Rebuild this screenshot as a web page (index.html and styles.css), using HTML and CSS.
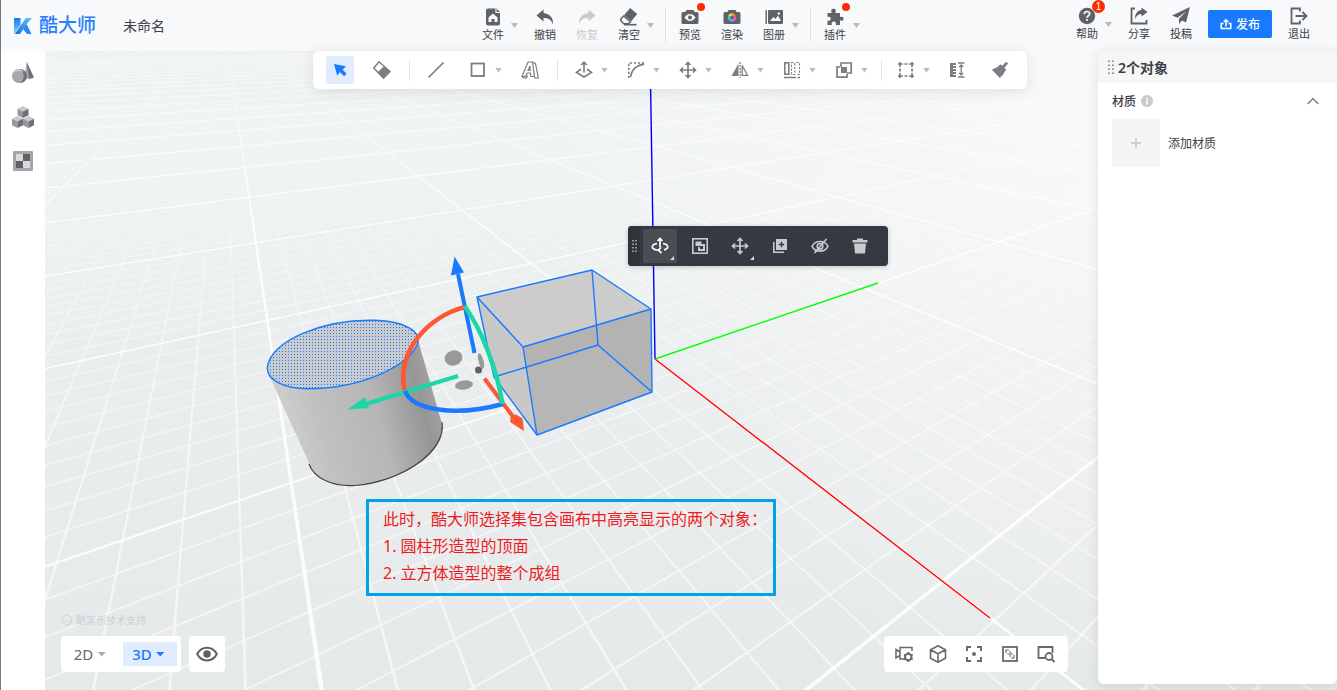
FILE: index.html
```html
<!DOCTYPE html>
<html lang="zh-CN">
<head>
<meta charset="utf-8">
<title>酷大师</title>
<link rel="stylesheet" href="styles.css">
</head>
<body>
<div class="app">
  <header class="topbar">
    <div class="brand">
      <svg class="brand-mark" viewBox="0 0 18 16" aria-hidden="true">
        <defs>
          <linearGradient id="lg1" x1="0" y1="0" x2="0" y2="1"><stop offset="0" stop-color="#1a73f5"/><stop offset="1" stop-color="#7fd4ff"/></linearGradient>
          <linearGradient id="lg2" x1="1" y1="0" x2="0" y2="1"><stop offset="0" stop-color="#5cc8ff"/><stop offset="1" stop-color="#1668f0"/></linearGradient>
        </defs>
        <path d="M0 0h6.500v7L0 16z" fill="url(#lg1)"/>
        <path d="M12 0h6l-6 7L6 16H.8z" fill="url(#lg2)"/>
        <path d="M9 11l3.500-5 5 10h-4.500z" fill="#2a86fb"/>
      </svg>
      <span class="brand-name">酷大师</span>
      <span class="doc-name">未命名</span>
    </div>

    <nav class="tools">
      <div class="drop">
        <button class="tool"><svg viewBox="0 0 18 18"><path d="M4 .5h8.500L16 4v11.500a2 2 0 0 1-2 2H4a2 2 0 0 1-2-2v-13a2 2 0 0 1 2-2z" fill="currentColor"/><path d="M12 .5v4h4" fill="none" stroke="#f7f9fb" stroke-width="1.200"/><path d="M9 5.500l4.500 4v4.500h-3v-3h-3v3h-3V9.500z" fill="#f7f9fb"/></svg><span>文件</span></button>
        <i class="caret"></i>
      </div>
      <button class="tool"><svg viewBox="0 0 18 18"><path d="M7.500 1.500L.5 7.500l7 6V10c5-.5 8 2 9.500 6.500.6-6-3-11-9.500-11.500z" fill="currentColor"/></svg><span>撤销</span></button>
      <button class="tool tool-off" disabled><svg viewBox="0 0 18 18"><path d="M10.500 1.500l7 6-7 6V10c-5-.5-8 2-9.500 6.500C.4 10.500 4 5.500 10.500 5z" fill="currentColor"/></svg><span>恢复</span></button>
      <div class="drop">
        <button class="tool"><svg viewBox="0 0 18 18"><path d="M10.200 0l7 6-6 7.200-7.200-6z" fill="currentColor"/><path d="M3.600 8l6.800 5.800-1.800 2H3.800L.8 12.800V11z" fill="none" stroke="currentColor" stroke-width="1.500"/><path d="M4 16.700h12.500" stroke="currentColor" stroke-width="1.600"/></svg><span>清空</span></button>
        <i class="caret"></i>
      </div>
      <i class="split"></i>
      <button class="tool"><svg viewBox="0 0 18 18"><path d="M5.500 2h7l1 2H16a1.500 1.500 0 0 1 1.500 1.500v9A1.500 1.500 0 0 1 16 16H2a1.500 1.500 0 0 1-1.500-1.500v-9A1.500 1.500 0 0 1 2 4h2.500z" fill="currentColor"/><path d="M3.500 9.500c3-4.600 8-4.600 11 0-3 4.600-8 4.600-11 0z" fill="#f7f9fb"/><circle cx="9" cy="9.500" r="2" fill="currentColor"/></svg><b class="dot"></b><span>预览</span></button>
      <button class="tool"><svg viewBox="0 0 18 18"><path d="M5.500 2h7l1 2H16a1.500 1.500 0 0 1 1.500 1.500v9A1.500 1.500 0 0 1 16 16H2a1.500 1.500 0 0 1-1.500-1.500v-9A1.500 1.500 0 0 1 2 4h2.500z" fill="currentColor"/><g fill="none" stroke-width="2.600"><path d="M9 6.500a3 3 0 0 1 2.600 1.500" stroke="#ff8a3c"/><path d="M11.600 8a3 3 0 0 1 0 3" stroke="#ff5577"/><path d="M11.600 11A3 3 0 0 1 9 12.500" stroke="#c66cff"/><path d="M9 12.500A3 3 0 0 1 6.400 11" stroke="#35b8ff"/><path d="M6.400 11a3 3 0 0 1 0-3" stroke="#35e08a"/><path d="M6.400 8A3 3 0 0 1 9 6.500" stroke="#e2e63a"/></g></svg><span>渲染</span></button>
      <div class="drop">
        <button class="tool"><svg viewBox="0 0 18 18"><path d="M1.200 2v14" stroke="currentColor" stroke-width="1.400"/><rect x="3" y="2" width="15" height="14" rx="1" fill="currentColor"/><path d="M5 13l3.500-4 2 2L13 7.500l3 5.500z" fill="#f7f9fb"/><circle cx="13.800" cy="5.500" r="1.200" fill="#f7f9fb"/></svg><span>图册</span></button>
        <i class="caret"></i>
      </div>
      <i class="split"></i>
      <div class="drop">
        <button class="tool"><svg viewBox="0 0 18 18"><path d="M1.500 5h4.200C4.500 1.500 6 .8 7.500.8S10.500 1.500 9.300 5h4.700v4.200c2.500-1 3.500 0 3.500 1.500s-1 2.600-3.500 1.500V17H9.800c.8-2.600-.6-3.500-2-3.500s-2.800.9-2 3.500H1.500v-4.500c2.500.8 3.200-.5 3.200-1.800S4 8.200 1.500 9z" fill="currentColor"/></svg><b class="dot"></b><span>插件</span></button>
        <i class="caret"></i>
      </div>
    </nav>

    <div class="account">
      <div class="drop">
        <button class="tool"><svg viewBox="0 0 18 18"><circle cx="9" cy="9" r="8.200" fill="currentColor"/><path d="M6.300 7.200c0-3.600 5.400-3.400 5.400-.4 0 1.900-2.700 2-2.700 4" fill="none" stroke="#f7f9fb" stroke-width="1.700"/><rect x="8.100" y="12" width="1.800" height="1.900" fill="#f7f9fb"/></svg><b class="count">1</b><span>帮助</span></button>
        <i class="caret"></i>
      </div>
      <button class="tool"><svg viewBox="0 0 18 18"><path d="M5 1.500H1.500v15h15V13" fill="none" stroke="currentColor" stroke-width="1.800"/><path d="M11.500.5L17.500 5l-6 4.500V7C8.500 7 6.500 8.500 5 12 5 6.500 7.500 3.500 11.500 3z" fill="currentColor"/></svg><span>分享</span></button>
      <button class="tool"><svg viewBox="0 0 18 18"><path d="M18 0L0 8.500l5.500 2.200L14 4.500l-7 7.300V17l3-3.600 4 2.100z" fill="currentColor"/></svg><span>投稿</span></button>
      <button class="publish"><svg viewBox="0 0 12 12" aria-hidden="true"><path d="M3.500 5.500H1.200v5h9.600v-5H8.500M6 8.500V2M3.800 4L6 1.800 8.200 4" fill="none" stroke="currentColor" stroke-width="1.500"/></svg>发布</button>
      <button class="tool"><svg viewBox="0 0 18 18"><path d="M10 4.500V1.500H1.500v15H10v-3M5.500 9H16M12.500 5l4 4-4 4" fill="none" stroke="currentColor" stroke-width="1.800"/></svg><span>退出</span></button>
    </div>
  </header>

  <main class="workspace">
    <aside class="rail">
      <button aria-label="基本体"><svg viewBox="0 0 22 22"><path d="M14.800 0l7 15.500-5.500 1.500-4-1.500z" fill="#a6a7ab"/><path d="M14.800 0l7 15.500-4.600 1.500z" fill="#6f7176"/><circle cx="7" cy="14" r="7" fill="#a6a7ab"/><path d="M8 7a7 7 0 0 1 0 14c5-3.500 5-10.500 0-14z" fill="#6f7176"/><path d="M1 11c2-4 8-5 11-1-4-1.800-7-1-11 1z" fill="#c6c7ca"/></svg></button>
      <button aria-label="组件"><svg viewBox="0 0 22 22"><g id="cube"><path d="M11 0l5.500 2.800L11 5.600 5.500 2.800z" fill="#c9cacd"/><path d="M5.500 2.800L11 5.600V12L5.500 9.200z" fill="#96979b"/><path d="M16.500 2.800L11 5.600V12l5.500-2.800z" fill="#6d6f74"/></g><use href="#cube" x="-5.500" y="10"/><use href="#cube" x="5.500" y="10"/></svg></button>
      <button aria-label="材质"><svg viewBox="0 0 22 22"><rect x="1" y="1" width="20" height="20" rx="1" fill="#a5a6aa"/><path d="M4 4h14v14H4z" fill="#d9dadc"/><path d="M11 4h7v7h-7zM4 11h7v7H4z" fill="#5f6166"/></svg></button>
    </aside>

    <section class="stage">
      <svg class="scene" viewBox="45 51 1292 639" preserveAspectRatio="xMinYMin slice" aria-hidden="true">
        <defs>
          <linearGradient id="floor" gradientUnits="userSpaceOnUse" x1="0" y1="51" x2="0" y2="690"><stop offset="0" stop-color="#eef1f1"/><stop offset=".12" stop-color="#f1f4f5"/><stop offset=".45" stop-color="#ebeeef"/><stop offset="1" stop-color="#e6e9ea"/></linearGradient>
          <radialGradient id="haze" gradientUnits="userSpaceOnUse" cx="1100" cy="120" r="560"><stop offset="0" stop-color="#fafafa" stop-opacity=".8"/><stop offset="1" stop-color="#fafafa" stop-opacity="0"/></radialGradient>
          <linearGradient id="fadeMinor" gradientUnits="userSpaceOnUse" x1="0" y1="130" x2="0" y2="420"><stop offset="0" stop-color="#000"/><stop offset=".5" stop-color="#888"/><stop offset="1" stop-color="#ccc"/></linearGradient>
          <linearGradient id="fadeMajor" gradientUnits="userSpaceOnUse" x1="0" y1="50" x2="0" y2="240"><stop offset="0" stop-color="#555"/><stop offset="1" stop-color="#fff"/></linearGradient>
          <mask id="maskMinor" maskUnits="userSpaceOnUse" x="0" y="0" width="3000" height="2000"><rect width="3000" height="2000" fill="url(#fadeMinor)"/></mask>
          <mask id="maskMajor" maskUnits="userSpaceOnUse" x="0" y="0" width="3000" height="2000"><rect width="3000" height="2000" fill="url(#fadeMajor)"/></mask>
          <linearGradient id="wall" gradientUnits="userSpaceOnUse" x1="285" y1="440" x2="440" y2="398"><stop offset="0" stop-color="#cfcfcf"/><stop offset=".25" stop-color="#c0c0c0"/><stop offset=".6" stop-color="#b6b6b6"/><stop offset=".88" stop-color="#959595"/><stop offset="1" stop-color="#a5a5a5"/></linearGradient>
          <pattern id="dots" width="3" height="3" patternUnits="userSpaceOnUse"><rect width="3" height="3" fill="#cbcbcb"/><rect width="1" height="1" fill="#1a7aff"/></pattern>
        </defs>
        <rect x="45" y="51" width="3000" height="2000" fill="url(#floor)"/>
        <rect x="45" y="51" width="3000" height="2000" fill="url(#haze)"/>
        <g mask="url(#maskMinor)"><path id="minor" fill="#fff" stroke="#fff" stroke-width=".6" opacity=".75"/></g>
        <g mask="url(#maskMajor)"><path id="major" fill="#fff" stroke="#fff" stroke-width="1" opacity=".85"/></g>

        <g fill="none" stroke-width="1.400">
          <path d="M650 51L655 359" stroke="#0000f5"/>
          <path d="M655 359L878 283" stroke="#0f0"/>
          <path d="M655 359L990 618" stroke="#f00"/>
        </g>

        <path d="M268 373L310 465C314 478 332 487 355 485.500 400 482 446 455 442 424L418 340z" fill="url(#wall)"/>
        <path d="M309 464C314 478 332 487 355 485.500 400 482 447 452 442 422" fill="none" stroke="#444" stroke-width="1.200"/>
        <path d="M267.300 368C270 340 325 319 375 320.300 405 321 422 332 417.500 344 408 366 362 388.500 308 388.700 284 388.500 267 380 267.300 368z" fill="url(#dots)" stroke="#1a7aff" stroke-width="1.400"/>

        <path d="M477 297L592 270 651 309 652 392 537 435 494 377z" fill="#c8c8c8"/>
        <path d="M477 297L592 270 651 309 523 347z" fill="#ccc"/>
        <path d="M523 347L651 309 652 392 537 435z" fill="#b3b3b3"/>
        <path d="M528 369L598 345 652 392 537 435z" fill="#b6b6b6"/>
        <path d="M477 297L592 270 651 309 652 392 537 435 494 377zM477 297L523 347 651 309M523 347L537 435M592 270L598 345 652 392M598 345L494 377" fill="none" stroke="#1a7aff" stroke-width="1.400" stroke-linejoin="round"/>

        <g fill="#999">
          <ellipse cx="453.500" cy="358" rx="9" ry="7.500" transform="rotate(-15 453.500 358)"/>
          <ellipse cx="464" cy="385" rx="9" ry="4.500" transform="rotate(-8 464 385)"/>
          <ellipse cx="481" cy="361" rx="2.500" ry="8" transform="rotate(-14 481 361)"/>
        </g>
        <circle cx="478.500" cy="370" r="3.500" fill="#606266"/>
        <path d="M458 274L474.500 353" stroke="#1a7aff" stroke-width="4"/>
        <path d="M454.500 256.500L464 272.500 451 275.500z" fill="#1a7aff"/>
        <path d="M484.500 378.500L514 418" stroke="#ff5733" stroke-width="4"/>
        <path d="M510 422L511 416 516 414.500 522.500 418.500 524 431z" fill="#ff5733"/>
        <path d="M465 307C430 316 395 350 405 392" fill="none" stroke="#ff5733" stroke-width="4.500"/>
        <path d="M366 404L458 376" stroke="#19d8a6" stroke-width="4"/>
        <path d="M347.500 409.500L365 397 369 408z" fill="#19d8a6"/>
        <path d="M405 391C412 410 455 417 503 404" fill="none" stroke="#1a7aff" stroke-width="4.500"/>
        <path d="M464.500 306C482 330 497 370 502.500 404" fill="none" stroke="#19d8a6" stroke-width="4.500"/>
      </svg>

      <div class="quickbar">
        <span class="quick-grip"><svg viewBox="0 0 5 14"><path d="M1 1v13M4 1v13" stroke="#b9bbbe" stroke-width="1.500" stroke-dasharray="1.500 2"/></svg></span>
        <button class="on more" aria-label="推拉"><svg viewBox="0 0 18 18"><g fill="none" stroke="currentColor" stroke-width="1.700"><path d="M9 2v8M6.500 4L9 1.500 11.500 4"/><path d="M6 6.500C.2 7.500-.3 11.500 5 12.800l4 .6M12 6.500c5.800 1 6.300 5 1 6.300M10 10.200L7.500 13.300 10.500 16"/></g></svg></button>
        <button aria-label="成组"><svg viewBox="0 0 18 18"><rect x="1.800" y="1.800" width="14.400" height="14.400" fill="none" stroke="currentColor" stroke-width="1.600"/><path d="M4.500 4.500h6V9h-6zM10 7h4v7H7V10h3z" fill="currentColor"/><rect x="9" y="9" width="3" height="3" fill="#353941"/></svg></button>
        <button class="more" aria-label="移动"><svg viewBox="0 0 18 18"><path d="M9 2v14M2 9h14M6.500 4L9 1.500 11.500 4M6.500 14L9 16.500l2.500-2.500M4 6.500L1.500 9 4 11.500M14 6.500L16.500 9 14 11.500" fill="none" stroke="currentColor" stroke-width="1.700"/></svg></button>
        <button aria-label="复制"><svg viewBox="0 0 18 18"><path d="M2.800 5v10.200H13" fill="none" stroke="currentColor" stroke-width="1.600"/><rect x="5" y="2" width="11" height="11" fill="currentColor"/><path d="M10.500 4.800v5.400M7.800 7.500h5.400" stroke="#353941" stroke-width="1.400"/></svg></button>
        <button aria-label="隐藏"><svg viewBox="0 0 18 18"><g fill="none" stroke="currentColor" stroke-width="1.600"><path d="M1 9.300C4.500 2.900 13.500 2.900 17 9.300 13.500 15.700 4.500 15.700 1 9.300z"/><circle cx="9" cy="9.300" r="2.800"/><path d="M3.500 16L15.500 2"/></g></svg></button>
        <button aria-label="删除"><svg viewBox="0 0 18 18"><path d="M6 1.500h6V3h4.500v2.500h-15V3H6zM3 6.500h12L14 16.500H4z" fill="currentColor"/></svg></button>
      </div>

      <div class="note">
        <p>此时，酷大师选择集包含画布中高亮显示的两个对象：</p>
        <p>1. 圆柱形造型的顶面</p>
        <p>2. 立方体造型的整个成组</p>
      </div>

      <div class="corner-left">
        <div class="support"><svg viewBox="0 0 12 12"><path d="M6 .7l4.600 2.600v5.400L6 11.300 1.400 8.700V3.300zM3.500 6.500c1.500 2 3.500 2 5 0" fill="none" stroke="currentColor"/></svg><span>酷家乐技术支持</span></div>
        <div class="views">
          <div class="card dims">
            <button class="dim">2D<i class="tri"></i></button>
            <button class="dim dim-on">3D<i class="tri"></i></button>
          </div>
          <button class="card eye" aria-label="显示"><svg viewBox="0 0 22 16"><path d="M1.200 8C5.500-.5 16.500-.5 20.800 8 16.500 16.500 5.500 16.500 1.200 8z" fill="none" stroke="currentColor" stroke-width="2"/><circle cx="11" cy="8" r="3.800" fill="currentColor"/></svg></button>
        </div>
      </div>

      <div class="card camera">
        <button aria-label="相机设置"><svg viewBox="0 0 18 18"><path d="M5 6V2.500h12V6M5 11.500V14h4.500M1 4.500l4 2.500v3.500L1 13z" fill="none" stroke="currentColor" stroke-width="1.500"/><circle cx="13.300" cy="12" r="3.200" fill="none" stroke="currentColor" stroke-width="2"/><path d="M13.300 7v2M13.300 15v2M9 9.500l1.700 1M16 13.500l1.700 1M9 14.500l1.700-1M16 10.500l1.700-1" stroke="currentColor" stroke-width="1.600"/></svg></button>
        <button aria-label="标准视图"><svg viewBox="0 0 18 18"><path d="M9 .8l7.500 4v8.400L9 17.200l-7.500-4V4.800zM1.500 4.800L9 8.800l7.500-4M9 8.800v8.400" fill="none" stroke="currentColor" stroke-width="1.600"/></svg></button>
        <button aria-label="居中"><svg viewBox="0 0 18 18"><path d="M2 6V2h4M12 2h4v4M16 12v4h-4M6 16H2v-4" fill="none" stroke="currentColor" stroke-width="1.900"/><circle cx="9" cy="9" r="2" fill="currentColor"/></svg></button>
        <button aria-label="充满视窗"><svg viewBox="0 0 18 18"><rect x="2" y="2" width="14" height="14" fill="none" stroke="currentColor" stroke-width="1.800"/><path d="M5 8V5h3M13 10v3h-3" fill="none" stroke="currentColor" stroke-width="1.100"/><path d="M9.200 6v6M6.200 9h6" stroke="#a0a2a6" stroke-width="1.700"/></svg></button>
        <button aria-label="框选缩放"><svg viewBox="0 0 18 18"><path d="M8 13H1.500V2h14v6" fill="none" stroke="currentColor" stroke-width="1.800"/><circle cx="12" cy="11.500" r="3.500" fill="none" stroke="currentColor" stroke-width="1.800"/><path d="M14.500 14l3 3" stroke="currentColor" stroke-width="1.900"/></svg></button>
      </div>

      <aside class="panel">
        <h2 class="panel-head"><svg viewBox="0 0 6 15" aria-hidden="true"><path d="M1 .5v15M5 .5v15" stroke="#6b6e73" stroke-width="1.500" stroke-dasharray="1.500 2.500"/></svg>2个对象</h2>
        <div class="panel-body">
          <div class="section-head">
            <h3>材质</h3>
            <svg class="info" viewBox="0 0 12 12" aria-hidden="true"><circle cx="6" cy="6" r="6" fill="#c9cacc"/><path d="M6 2.500v1.700M6 5v4.500" stroke="#fff" stroke-width="1.500"/></svg>
            <button class="fold" aria-label="收起"><svg viewBox="0 0 12 8"><path d="M.7 7L6 1.500 11.300 7" fill="none" stroke="#7b7e83" stroke-width="1.500"/></svg></button>
          </div>
          <button class="add"><span class="swatch"><svg viewBox="0 0 10 10"><path d="M5 0v10M0 5h10" stroke="#c4c5c7" stroke-width="1.500"/></svg></span>添加材质</button>
        </div>
      </aside>
    </section>

    <div class="modelbar-wrap">
      <div class="modelbar">
        <div class="cell"><button class="sel" aria-label="选择"><svg viewBox="0 0 18 18"><path d="M3 3l12 2.300-3.400 3.400 4 4-2.500 2.600-4.200-4.200-2.600 3.700z" fill="currentColor"/></svg></button></div>
        <div class="cell"><button aria-label="橡皮擦"><svg viewBox="0 0 18 18"><path d="M6 .8l11 9.700-6.500 6.700L.8 7z" fill="none" stroke="currentColor" stroke-width="1.400"/><path d="M11 5.200l6 5.300-6.500 6.700-6-6z" fill="currentColor"/></svg></button></div>
        <i class="bar"></i>
        <div class="cell"><button aria-label="直线"><svg viewBox="0 0 18 18"><path d="M1.500 16.500l15-15" stroke="currentColor" stroke-width="1.700"/></svg></button></div>
        <div class="cell"><button aria-label="矩形"><svg viewBox="0 0 18 18"><rect x="2.500" y="2.500" width="12.500" height="12.500" fill="none" stroke="currentColor" stroke-width="1.800"/></svg></button><i class="caret"></i></div>
        <div class="cell"><button aria-label="文字"><svg viewBox="0 0 18 18"><path d="M1 15.500L7 1h4.500L13.500 15.500h-3.700L9.500 12H6l-1.300 3.500zM7 9.500h2.300L9 5zM11.500 1l3 1.500 2.800 14.500h-3.500l-.3-1.500M1 15.500L2.500 17h3l1-2.500" fill="none" stroke="currentColor" stroke-width="1.200"/></svg></button></div>
        <i class="bar"></i>
        <div class="cell"><button aria-label="推拉"><svg viewBox="0 0 18 18"><path d="M9 1.500v10M6.200 4L9 1.200 11.800 4M6 8L1.500 11.500 9 16l7.500-4.500L12 8" fill="none" stroke="currentColor" stroke-width="1.600"/></svg></button><i class="caret"></i></div>
        <div class="cell"><button aria-label="圆弧"><svg viewBox="0 0 18 18"><path d="M1.800 17V2H17" fill="none" stroke="currentColor" stroke-width="1.600" stroke-dasharray="2.200 1.800"/><path d="M3.500 16C5 8 9 4.500 17 3" fill="none" stroke="currentColor" stroke-width="1.800"/></svg></button><i class="caret"></i></div>
        <div class="cell"><button aria-label="移动"><svg viewBox="0 0 18 18"><path d="M9 2v14M2 9h14M6.500 4L9 1.500 11.500 4M6.500 14L9 16.500l2.500-2.500M4 6.500L1.500 9 4 11.500M14 6.500L16.500 9 14 11.500" fill="none" stroke="currentColor" stroke-width="1.700"/></svg></button><i class="caret"></i></div>
        <div class="cell"><button aria-label="镜像"><svg viewBox="0 0 18 18"><path d="M7.500 2.500V15H.5z" fill="currentColor"/><path d="M11.200 4.500V14.300h5.300z" fill="none" stroke="currentColor" stroke-width="1.300"/><path d="M9.200 1v16" stroke="currentColor" stroke-width="1.300" stroke-dasharray="2 1"/></svg></button><i class="caret"></i></div>
        <div class="cell"><button aria-label="阵列"><svg viewBox="0 0 18 18"><rect x="1.800" y="1.800" width="4" height="11.400" fill="none" stroke="currentColor" stroke-width="1.600"/><path d="M8.500 1.500h3.200v12H8.500zM13.500 1.500h3v12h-3" fill="none" stroke="currentColor" stroke-width="1.100" stroke-dasharray="2.200 1.500"/><path d="M1 16.500h12M14.500 16.500H17" stroke="currentColor" stroke-width="1.300"/></svg></button><i class="caret"></i></div>
        <div class="cell"><button aria-label="布尔"><svg viewBox="0 0 18 18"><path d="M6 6V2h10.200v10H12" fill="none" stroke="currentColor" stroke-width="1.700"/><path d="M5 6H2v10.200h10V13" fill="none" stroke="currentColor" stroke-width="1.700"/><rect x="6" y="6" width="6" height="6" fill="currentColor"/></svg></button><i class="caret"></i></div>
        <i class="bar bar-tight"></i>
        <div class="cell"><button aria-label="成组"><svg viewBox="0 0 18 18"><path d="M1 3h5M7.500 3h3M12 3h5M1 15h5M7.500 15h3M12 15h5M3 1v5M3 7.500v3M3 12v5M15 1v5M15 7.500v3M15 12v5" fill="none" stroke="currentColor" stroke-width="1.700"/></svg></button><i class="caret"></i></div>
        <div class="cell"><button aria-label="测量"><svg viewBox="0 0 18 18"><path d="M1 2h6v14H1z" fill="currentColor"/><path d="M4 4.500h3M4 7.500h3M4 10.500h3M4 13.500h3" stroke="#fff"/><path d="M9 2h6.500M9 16h6.500M12.200 3.500v11M10.300 6l1.900-2 1.900 2M10.300 12l1.900 2 1.900-2" fill="none" stroke="currentColor" stroke-width="1.300"/></svg></button></div>
        <div class="cell"><button aria-label="油漆"><svg viewBox="0 0 18 18"><path d="M.8 8.800L6.500 6l6.500 6.500L8.800 17z" fill="currentColor"/><path d="M6 6.500l3.300-3.300 2 1.600L14.800 1l2.400 1.200-3.700 4.600 1.700 2-2.700 3.700z" fill="currentColor"/></svg></button></div>
      </div>
    </div>
  </main>
</div>
<script src="grid.js"></script>
</body>
</html>
```

FILE: styles.css
```css
* { box-sizing: border-box; }
body, h2, h3, p { margin: 0; }
body, button {
  font-family: "Noto Sans", "Noto Sans CJK SC", sans-serif;
  font-size: 12px;
  color: #3c4046;
}
button {
  border: 0;
  padding: 0;
  background: none;
  display: flex;
  align-items: center;
  justify-content: center;
  cursor: pointer;
}
svg { display: block; flex: none; }

.app {
  height: 100vh;
  display: flex;
  flex-direction: column;
  overflow: hidden;
  border-left: 1px solid #77797d;
}

/* header */
.topbar {
  height: 51px;
  flex: none;
  display: grid;
  grid-template-columns: 1fr auto 1fr;
  background: #f7f9fb;
}
.brand { display: flex; align-items: center; padding-left: 13px; }
.brand-mark { width: 18px; height: 16px; margin-right: 7px; }
.brand-name {
  font-size: 19px;
  font-weight: 500;
  line-height: 24px;
  color: #2a7ffb;
  margin-right: 27px;
}
.doc-name { font-size: 14px; }
.brand-name, .doc-name { margin-bottom: 2px; }
.tools, .account { display: flex; align-items: flex-start; gap: 6px; padding-top: 8px; }
.account { justify-content: flex-end; padding-top: 7px; padding-right: 20px; }
.tool {
  position: relative;
  width: 36px;
  flex-direction: column;
  gap: 1px;
  font-size: 11px;
  line-height: 16px;
}
.tool svg { width: 18px; height: 18px; color: #5f6368; }
.tool-off, .tool-off svg { color: #c9cbce; }
.drop { display: flex; padding-right: 3px; }
.caret {
  width: 7px;
  height: 5px;
  background: #b9bbbe;
  clip-path: polygon(0 0, 100% 0, 50% 100%);
}
.drop .caret { margin-top: 15px; }
.split { width: 1px; height: 34px; margin-left: 2px; background: #e0e2e4; }
.dot {
  position: absolute;
  top: -5px;
  right: 3px;
  width: 8px;
  height: 8px;
  border-radius: 50%;
  background: #ff2a00;
}
.count {
  position: absolute;
  top: -7px;
  right: 0;
  width: 13px;
  height: 13px;
  border-radius: 50%;
  background: #ff2a00;
  color: #fff;
  font-family: "Liberation Sans", sans-serif;
  font-size: 10px;
  font-weight: 400;
  line-height: 13px;
  text-align: center;
}
.publish {
  width: 64px;
  height: 28px;
  margin: 3px 3px 0;
  gap: 4px;
  border-radius: 2px;
  background: #1a7aff;
  color: #fff;
  font-weight: 500;
}
.publish svg { width: 12px; height: 12px; }

/* workspace */
.workspace { position: relative; flex: 1; display: flex; min-height: 0; }
.rail {
  width: 44px;
  display: flex;
  flex-direction: column;
  gap: 22px;
  padding-top: 11px;
  background: #fff;
}
.rail svg { width: 22px; height: 22px; }
.stage { position: relative; flex: 1; min-width: 0; }
.scene { position: absolute; inset: 0; width: 100%; height: 100%; }

/* modelling toolbar */
.modelbar-wrap {
  position: absolute;
  inset: 0 0 auto;
  display: flex;
  justify-content: center;
  padding-left: 2px;
  pointer-events: none;
}
.modelbar {
  display: flex;
  align-items: center;
  height: 38px;
  padding: 0 6px;
  border-radius: 6px;
  background: #fff;
  box-shadow: 0 2px 14px rgba(40, 50, 60, .12);
  pointer-events: auto;
}
.cell { display: flex; align-items: center; padding: 0 7px; }
.cell button { width: 28px; height: 28px; border-radius: 2px; color: #7b7e83; }
.cell svg { width: 18px; height: 18px; }
.cell .sel { background: #e1edff; color: #1a7aff; }
.cell .caret { margin-left: 3px; }
.bar { width: 1px; height: 22px; margin: 0 5px 0 6px; background: #e3e5e7; }
.bar-tight { margin-right: 3px; }

/* contextual bar */
.quickbar {
  position: absolute;
  left: 583px;
  top: 175px;
  display: flex;
  align-items: center;
  gap: 6px;
  height: 40px;
  padding-right: 11px;
  border-radius: 4px;
  background: #353941;
  overflow: hidden;
  box-shadow: 0 1px 5px rgba(0, 0, 0, .2);
}
.quick-grip {
  display: flex;
  align-items: center;
  justify-content: center;
  width: 12px;
  height: 40px;
  margin-right: -3px;
  background: #2f333a;
}
.quick-grip svg { width: 5px; height: 14px; }
.quickbar button { position: relative; width: 34px; height: 34px; border-radius: 2px; color: #c9cacd; }
.quickbar button svg { width: 18px; height: 18px; }
.quickbar .on { background: #4a4d54; color: #fff; }
.more::after {
  content: "";
  position: absolute;
  right: 3px;
  bottom: 3px;
  border: 2px solid transparent;
  border-right-color: #dcdddf;
  border-bottom-color: #dcdddf;
}

/* annotation */
.note {
  position: absolute;
  left: 321px;
  top: 448px;
  width: 410px;
  padding: 4px 0 6px 14px;
  border: 3px solid #00a2e8;
  color: #ed1c24;
  font-size: 16px;
  line-height: 27px;
  white-space: nowrap;
}

/* bottom controls */
.card { border-radius: 4px; background: #fff; }
.corner-left { position: absolute; left: 16px; bottom: 18px; }
.support {
  display: flex;
  align-items: center;
  gap: 3px;
  margin-bottom: 8px;
  font-size: 10px;
  line-height: 16px;
  color: #ccd0d2;
}
.support svg { width: 12px; height: 12px; }
.views { display: flex; gap: 8px; }
.dims { display: flex; align-items: center; gap: 6px; height: 36px; padding: 0 4px 0 2px; }
.dim { width: 54px; height: 24px; gap: 4px; font-size: 15px; color: #65686d; }
.dim .tri { color: #a9abaf; }
.dim-on, .dim-on .tri { color: #1a7aff; font-weight: 500; }
.dim-on { padding-right: 3px; background: #e1edff; }
.tri {
  width: 9px;
  height: 5px;
  background: currentColor;
  clip-path: polygon(0 0, 100% 0, 50% 100%);
}
.eye { width: 36px; height: 36px; color: #5f6368; }
.eye svg { width: 22px; height: 16px; }
.camera {
  position: absolute;
  right: 269px;
  bottom: 18px;
  display: flex;
  align-items: center;
  height: 36px;
  padding: 0 4px;
}
.camera button { width: 36px; height: 36px; color: #65686d; }
.camera button:first-child { width: 32px; }
.camera svg { width: 18px; height: 18px; }

/* property panel */
.panel {
  position: absolute;
  top: 0;
  right: 0;
  bottom: 6px;
  width: 239px;
  border-radius: 6px;
  background: #fff;
  overflow: hidden;
  box-shadow: 0 2px 12px rgba(40, 50, 60, .12);
}
.panel-head {
  display: flex;
  align-items: center;
  gap: 4px;
  height: 32px;
  padding-left: 10px;
  background: #f6f6f7;
  font-size: 14px;
  font-weight: 600;
}
.panel-head svg { width: 6px; height: 15px; }
.panel-body { padding: 8px 18px 0 14px; }
.section-head { display: flex; align-items: center; gap: 5px; height: 20px; margin-bottom: 8px; }
.section-head h3 { font-size: 12px; font-weight: 500; }
.info { width: 12px; height: 12px; }
.fold { margin-left: auto; }
.fold svg { width: 12px; height: 8px; }
.add { gap: 8px; }
.swatch {
  display: flex;
  align-items: center;
  justify-content: center;
  width: 48px;
  height: 48px;
  border-radius: 2px;
  background: #f5f5f5;
}
.swatch svg { width: 10px; height: 10px; }
```

FILE: grid.js
```js
// Floor grid in two-point perspective: every line leaves one of the two
// vanishing points and crosses the level of the world origin at even steps.
const LEVEL = 359;
const ORIGIN_X = 655;
const REACH = 4;

function ray(vx, vy, x, half) {
  const far = (px) => `${(vx + (px - vx) * REACH).toFixed(1)} ${(vy + (LEVEL - vy) * REACH).toFixed(1)}`;
  return `M${vx} ${vy}L${far(x - half)} ${far(x + half)}z`;
}

function family(vx, vy, unit, from, to, half) {
  let major = "";
  let minor = "";
  for (let i = from * 10; i <= to * 10; i++) {
    const x = ORIGIN_X + (unit * i) / 10;
    if (i % 10 === 0) major += ray(vx, vy, x, half);
    else if (Math.abs(i) < 80) minor += ray(vx, vy, x, half * 0.6);
  }
  return [major, minor];
}

const a = family(1642, 23, 566, -24, 2, 1.3);
const b = family(224, 26, 382, -20, 24, 0.9);
document.getElementById("major").setAttribute("d", a[0] + b[0]);
document.getElementById("minor").setAttribute("d", a[1] + b[1]);
```
